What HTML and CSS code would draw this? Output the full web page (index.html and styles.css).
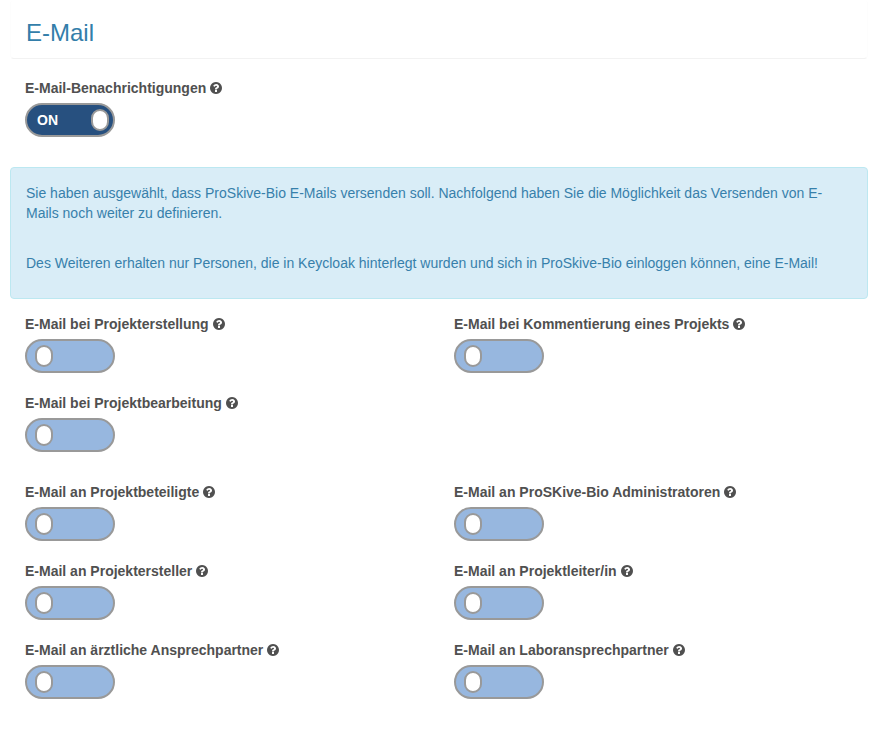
FILE: index.html
```
<!DOCTYPE html>
<html lang="de">
<head>
<meta charset="utf-8">
<title>E-Mail</title>
<link rel="stylesheet" href="styles.css">
</head>
<body>
<svg class="sprite" aria-hidden="true">
  <symbol id="help" viewBox="128 128 1536 1536"><path d="M1024 1376v-192q0-14-9-23t-23-9h-192q-14 0-23 9t-9 23v192q0 14 9 23t23 9h192q14 0 23-9t9-23zM1280 704q0-88-55.500-163t-138.500-116-170-41q-243 0-371 213-15 24 8 42l132 100q7 6 19 6 16 0 25-12 53-68 86-92 34-24 86-24 48 0 85.500 26t37.500 59q0 38-20 61t-68 45q-63 28-115.500 86.500t-52.500 125.500v36q0 14 9 23t23 9h192q14 0 23-9t9-23q0-19 21.500-49.500t54.500-49.500q32-18 49-28.500t46-35 44.500-48 28-60.500 12.500-81zM1664 896q0 209-103 385.500t-279.500 279.500-385.500 103-385.500-103-279.500-279.500-103-385.500 103-385.500 279.500-279.500 385.500-103 385.500 103 279.500 279.500 103 385.500z" fill-rule="evenodd"/></symbol>
</svg>
<main class="panel">
  <h1 class="panel-heading">E-Mail</h1>
  <section class="fields">
    <div class="field">
      <label for="notify">E-Mail-Benachrichtigungen <svg class="help"><use href="#help"/></svg></label>
      <div class="switch"><input type="checkbox" id="notify" checked><span class="switch-text">ON</span></div>
    </div>
  </section>
  <div class="alert">
    <p>Sie haben ausgewählt, dass ProSkive-Bio E-Mails versenden soll. Nachfolgend haben Sie die Möglichkeit das Versenden von E-Mails noch weiter zu definieren.</p>
    <p>Des Weiteren erhalten nur Personen, die in Keycloak hinterlegt wurden und sich in ProSkive-Bio einloggen können, eine E-Mail!</p>
  </div>
  <section class="fields">
    <div class="field">
      <label for="created">E-Mail bei Projekterstellung <svg class="help"><use href="#help"/></svg></label>
      <div class="switch"><input type="checkbox" id="created"></div>
    </div>
    <div class="field">
      <label for="commented">E-Mail bei Kommentierung eines Projekts <svg class="help"><use href="#help"/></svg></label>
      <div class="switch"><input type="checkbox" id="commented"></div>
    </div>
    <div class="field">
      <label for="edited">E-Mail bei Projektbearbeitung <svg class="help"><use href="#help"/></svg></label>
      <div class="switch"><input type="checkbox" id="edited"></div>
    </div>
  </section>
  <section class="fields">
    <div class="field">
      <label for="members">E-Mail an Projektbeteiligte <svg class="help"><use href="#help"/></svg></label>
      <div class="switch"><input type="checkbox" id="members"></div>
    </div>
    <div class="field">
      <label for="admins">E-Mail an ProSKive-Bio Administratoren <svg class="help"><use href="#help"/></svg></label>
      <div class="switch"><input type="checkbox" id="admins"></div>
    </div>
    <div class="field">
      <label for="creator">E-Mail an Projektersteller <svg class="help"><use href="#help"/></svg></label>
      <div class="switch"><input type="checkbox" id="creator"></div>
    </div>
    <div class="field">
      <label for="leader">E-Mail an Projektleiter/in <svg class="help"><use href="#help"/></svg></label>
      <div class="switch"><input type="checkbox" id="leader"></div>
    </div>
    <div class="field">
      <label for="medical">E-Mail an ärztliche Ansprechpartner <svg class="help"><use href="#help"/></svg></label>
      <div class="switch"><input type="checkbox" id="medical"></div>
    </div>
    <div class="field">
      <label for="lab">E-Mail an Laboransprechpartner <svg class="help"><use href="#help"/></svg></label>
      <div class="switch"><input type="checkbox" id="lab"></div>
    </div>
  </section>
</main>
</body>
</html>
```
FILE: styles.css
```
*, *::before { box-sizing: border-box; }
body {
  margin: 0;
  background: #fff;
  color: #505050;
  font: 14px/20px "Liberation Sans", Arial, sans-serif;
}
.sprite { display: none; }
.panel { margin: 0 13px 0 10px; }
.panel-heading {
  margin: 0 0 19px;
  padding: 20px 15px 12px;
  border: solid #f2f2f2;
  border-width: 0 1px 1px;
  border-left-color: #fdfdfd;
  border-right-color: #fdfdfd;
  border-radius: 4px;
  color: #337eaa;
  font-size: 24px;
  line-height: 26px;
  font-weight: 400;
}
.fields {
  display: grid;
  grid-template-columns: 1fr 1fr;
  row-gap: 20px;
  margin-bottom: 30px;
  padding: 0 15px;
}
.field { display: flex; flex-direction: column; align-items: flex-start; gap: 5px; }
.field:nth-child(even) { padding-left: 15px; }
label { font-weight: 700; }
.help {
  width: 12px;
  height: 12px;
  fill: currentColor;
  vertical-align: -1px;
}
.switch { display: grid; grid-template-columns: 90px; align-items: center; }
.switch > * { grid-area: 1 / 1; }
.switch input {
  appearance: none;
  display: flex;
  align-items: center;
  height: 34px;
  margin: 0;
  padding: 0 8px;
  border: 2px solid #999;
  border-radius: 17px;
  background: #97b7df;
}
.switch input::before {
  content: "";
  width: 18px;
  height: 22px;
  border: 2px solid #999;
  border-radius: 9px;
  background: #fff;
}
.switch input:checked {
  justify-content: flex-end;
  padding: 0 4px;
  background: #27507f;
}
.switch-text {
  padding-left: 12px;
  color: #fff;
  font-weight: 700;
  pointer-events: none;
}
.alert {
  margin-bottom: 15px;
  padding: 15px 15px 25px;
  border: 1px solid #bce8f1;
  border-radius: 4px;
  background: #d9edf7;
  color: #3780ab;
}
.alert p { margin: 0 0 30px; }
.alert p:last-child { margin: 0; }
```
